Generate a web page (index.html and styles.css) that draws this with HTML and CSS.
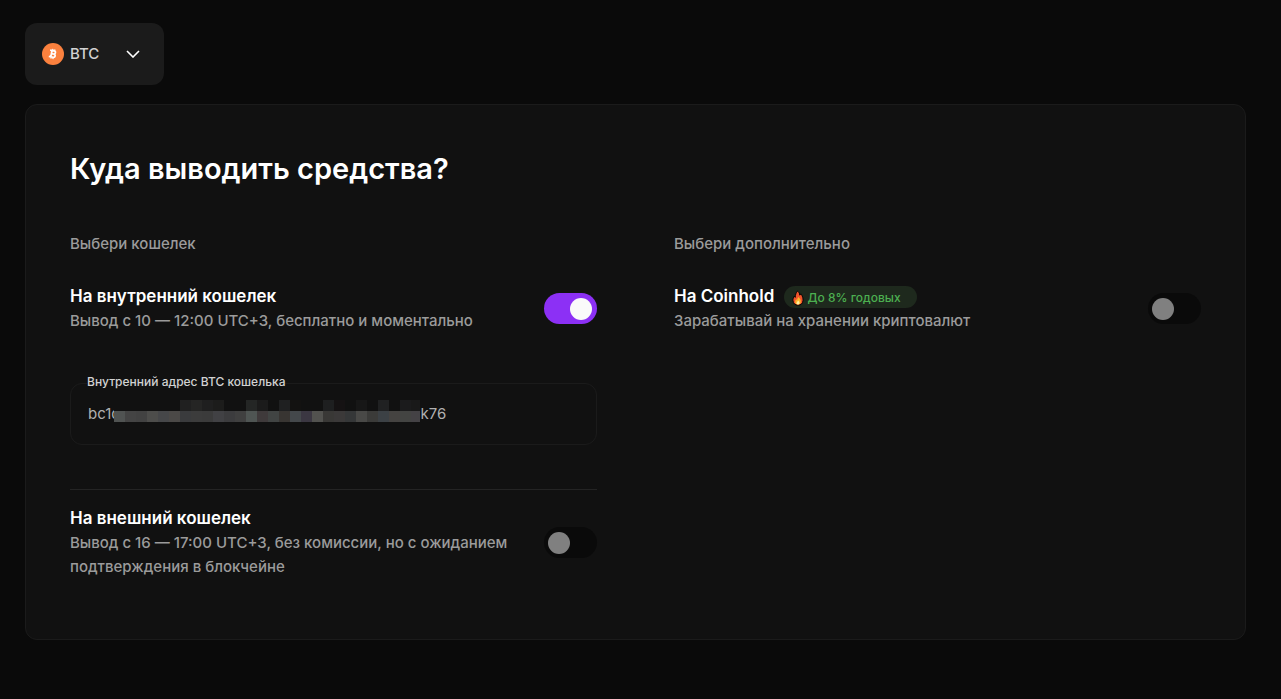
FILE: index.html
```html
<!DOCTYPE html>
<html lang="ru">
<head>
<meta charset="utf-8">
<meta name="viewport" content="width=device-width, initial-scale=1">
<title>Куда выводить средства?</title>
<link rel="stylesheet" href="styles.css">
</head>
<body>
<main class="page">
  <div class="coin-select">
    <svg class="coin-icon" viewBox="0 0 22 22" aria-hidden="true">
      <circle cx="11" cy="11" r="11" fill="#fb813e"/>
      <g transform="rotate(12 11 11)" fill="none" stroke="#fff" stroke-width="1.7">
        <path d="M9.4 7.8V14.2M7.4 7.8H11.4Q13.1 7.8 13.1 9.3T11.4 10.9H9.4M11.4 10.9Q13.5 10.9 13.5 12.5T11.7 14.2H7.4"/>
        <path d="M9.9 6V7.6M11.9 6V7.6M9.9 14.4V16M11.9 14.4V16" stroke-width="1.2"/>
      </g>
    </svg>
    <select class="coin-field" aria-label="Монета">
      <option>BTC</option>
    </select>
    <svg class="chevron" viewBox="0 0 14 8" aria-hidden="true">
      <path d="M1 1L7 7L13 1" fill="none" stroke="#fff" stroke-width="1.6"/>
    </svg>
  </div>

  <section class="card">
    <h1 class="title">Куда выводить средства?</h1>
    <div class="columns">
      <div class="column">
        <h2 class="caption">Выбери кошелек</h2>
        <div class="option">
          <label class="option-text" for="internal">
            <span class="option-name">На внутренний кошелек</span>
            <span class="option-note">Вывод с 10 — 12:00 UTC+3, бесплатно и моментально</span>
          </label>
          <input class="switch" type="checkbox" role="switch" id="internal" checked>
        </div>
        <div class="address">
          <label class="address-label" for="address">Внутренний адрес BTC кошелька</label>
          <input class="address-input" id="address" type="text" readonly value="bc1q&#8195;&#8195;&#8195;&#8195;&#8195;&#8195;&#8195;&#8195;&#8195;&#8195;&#8195;&#8195;&#8195;&#8195;&#8195;&#8195;&#8195;&#8195;&#8195;&#8196;&#8196;&#8196;k76">
          <svg class="mosaic" viewBox="0 0 306 22" shape-rendering="crispEdges" aria-hidden="true">
            <path fill="#111" d="M0 0H306V22H0z"/>
            <path fill="#202020" d="M66 0h11v11h-11z"/><path fill="#252524" d="M77 0h11v11h-11z"/><path fill="#1f1f1f" d="M88 0h11v11h-11z"/><path fill="#1c1c1b" d="M99 0h11v11h-11z"/><path fill="#242625" d="M132 0h11v11h-11z"/><path fill="#1b1b1b" d="M143 0h11v11h-11z"/><path fill="#1f2021" d="M165 0h11v11h-11z"/><path fill="#131211" d="M176 0h11v11h-11z"/><path fill="#1e1f20" d="M209 0h11v11h-11z"/><path fill="#151213" d="M220 0h11v11h-11z"/><path fill="#171717" d="M242 0h11v11h-11z"/><path fill="#202122" d="M264 0h11v11h-11z"/><path fill="#1b1b1c" d="M286 0h11v11h-11z"/><path fill="#191919" d="M297 0h9v11h-9z"/>
            <path fill="#505352" d="M0 11h11v11h-11z"/><path fill="#444" d="M11 11h11v11h-11z"/><path fill="#424242" d="M22 11h11v11h-11z"/><path fill="#4d4d4b" d="M33 11h11v11h-11z"/><path fill="#464749" d="M44 11h11v11h-11z"/><path fill="#4b4947" d="M55 11h11v11h-11z"/><path fill="#3a3b3d" d="M66 11h11v11h-11z"/><path fill="#3c3c3c" d="M77 11h11v11h-11z"/><path fill="#3b3b3b" d="M88 11h11v11h-11z"/><path fill="#414144" d="M99 11h11v11h-11z"/><path fill="#3c3c3e" d="M110 11h11v11h-11z"/><path fill="#404040" d="M121 11h11v11h-11z"/><path fill="#4f5553" d="M132 11h11v11h-11z"/><path fill="#3f3a3b" d="M143 11h11v11h-11z"/><path fill="#414443" d="M154 11h11v11h-11z"/><path fill="#383532" d="M165 11h11v11h-11z"/><path fill="#44484b" d="M176 11h11v11h-11z"/><path fill="#3b3742" d="M187 11h11v11h-11z"/><path fill="#52524f" d="M198 11h11v11h-11z"/><path fill="#393836" d="M209 11h11v11h-11z"/><path fill="#3b3939" d="M220 11h11v11h-11z"/><path fill="#353738" d="M231 11h11v11h-11z"/><path fill="#494947" d="M242 11h11v11h-11z"/><path fill="#3b3b39" d="M253 11h11v11h-11z"/><path fill="#3c4145" d="M264 11h11v11h-11z"/><path fill="#454341" d="M275 11h11v11h-11z"/><path fill="#434442" d="M286 11h11v11h-11z"/><path fill="#444245" d="M297 11h9v11h-9z"/>
          </svg>
        </div>
        <hr class="divider">
        <div class="option">
          <label class="option-text" for="external">
            <span class="option-name">На внешний кошелек</span>
            <span class="option-note">Вывод с 16 — 17:00 UTC+3, без комиссии, но с ожиданием подтверждения в блокчейне</span>
          </label>
          <input class="switch" type="checkbox" role="switch" id="external">
        </div>
      </div>

      <div class="column">
        <h2 class="caption">Выбери дополнительно</h2>
        <div class="option">
          <label class="option-text" for="coinhold">
            <span class="option-name">На Coinhold
              <span class="badge">
                <svg class="flame" viewBox="0 0 12 16" aria-hidden="true">
                  <path d="M5.6 1C7 2 7.6 3.4 7.8 5.2L8.8 3.8C10.6 6 11.3 8.4 11 10.8C10.7 13.6 8.8 15.2 6 15.2S1.2 13.6 1 10.8C.8 8.8 1.5 7.4 2.2 6.2L3.2 7.4C3.3 4.8 4 2.6 5.6 1z" fill="#f2542b" stroke="#050505" stroke-width="1"/>
                  <path d="M6.4 7C8 8.6 9 10 8.8 11.8C8.6 13.6 7.6 14.6 6 14.6S3.2 13.4 3.2 11.8C3.2 10.6 3.8 9.8 4.4 9.2L5 10.2C5.2 9 5.6 8 6.4 7z" fill="#fdb52c"/>
                  <path d="M6.2 10.4C7.2 11.4 7.6 12.2 7.4 13.2Q7 14.6 6 14.6T4.6 13.2Q4.6 12.2 6.2 10.4z" fill="#fff0a0"/>
                </svg>
                До 8% годовых
              </span>
            </span>
            <span class="option-note">Зарабатывай на хранении криптовалют</span>
          </label>
          <input class="switch" type="checkbox" role="switch" id="coinhold">
        </div>
      </div>
    </div>
  </section>
</main>
</body>
</html>
```
FILE: styles.css
```css
* {
  box-sizing: border-box;
}

body {
  margin: 0;
  background: #0a0a0a;
  color: #fff;
  font-family: Inter, "Liberation Sans", sans-serif;
  font-size: 15px;
  line-height: 24px;
}

.page {
  display: flex;
  flex-direction: column;
  align-items: flex-start;
  gap: 19px;
  padding: 23px 35px 40px 25px;
}

.coin-select {
  display: grid;
  grid-template-columns: 45px 1fr 38px;
  align-items: center;
  border-radius: 12px;
  background: #1b1b1b;
}

.coin-icon {
  grid-area: 1 / 1;
  width: 22px;
  height: 22px;
  margin-left: 17px;
  pointer-events: none;
}

.coin-field {
  grid-area: 1 / 1 / 2 / 4;
  width: 139px;
  height: 62px;
  padding: 0 45px;
  border: 0;
  border-radius: 12px;
  appearance: none;
  background: transparent;
  color: #d2d2d2;
  font: inherit;
  font-weight: 500;
}

.chevron {
  grid-area: 1 / 3;
  width: 14px;
  height: 8px;
  pointer-events: none;
}

.card {
  width: 100%;
  padding: 44px 44px 60px;
  border: 1px solid #1b1b1b;
  border-radius: 12px;
  background: #111;
}

.title {
  margin: 0 0 43px;
  font-size: 29px;
  font-weight: 600;
  line-height: 40px;
}

.columns {
  display: grid;
  grid-template-columns: 1fr 1fr;
  gap: 77px;
}

.caption {
  margin: 0 0 28px;
  color: #9b9b9b;
  font-size: 15px;
  font-weight: 500;
  line-height: 24px;
}

.option {
  display: flex;
  align-items: center;
  justify-content: space-between;
  gap: 24px;
}

.option-text,
.option-name,
.option-note {
  display: block;
}

.option-name {
  font-size: 17px;
  font-weight: 600;
  line-height: 25px;
}

.option-note {
  color: #9b9b9b;
  font-weight: 500;
}

.switch {
  display: flex;
  flex: none;
  align-items: center;
  width: 53px;
  height: 31px;
  margin: 0;
  padding: 0 4px;
  border-radius: 16px;
  appearance: none;
  background: #0a0a0a;
}

.switch::before {
  width: 22px;
  height: 22px;
  border-radius: 50%;
  background: #808080;
  content: "";
}

.switch:checked {
  justify-content: flex-end;
  padding: 0 5px;
  background: #8c30f5;
}

.switch:checked::before {
  background: #fafafa;
}

.address {
  position: relative;
  margin-top: 50px;
}

.address-label {
  position: absolute;
  top: -9px;
  left: 17px;
  background: #111;
  color: #d2d2d2;
  font-size: 12px;
  font-weight: 500;
  line-height: 16px;
}

.address-input {
  display: block;
  width: 100%;
  height: 62px;
  padding: 0 17px 2px;
  border: 1px solid #1b1b1b;
  border-radius: 12px;
  background: transparent;
  color: #b0b0b0;
  font: inherit;
}

.mosaic {
  position: absolute;
  top: 17px;
  left: 44px;
  width: 306px;
  height: 22px;
}

.divider {
  height: 1px;
  margin: 44px 0 16px;
  border: 0;
  background: #242424;
}

.badge {
  display: inline-flex;
  align-items: center;
  gap: 4px;
  height: 22px;
  margin-left: 5px;
  padding: 2px 16px 0 8px;
  border-radius: 11px;
  background: #1e291d;
  color: #4caf50;
  font-size: 12px;
  font-weight: 500;
  line-height: 20px;
  vertical-align: middle;
}

.flame {
  width: 12px;
  height: 16px;
}
```
